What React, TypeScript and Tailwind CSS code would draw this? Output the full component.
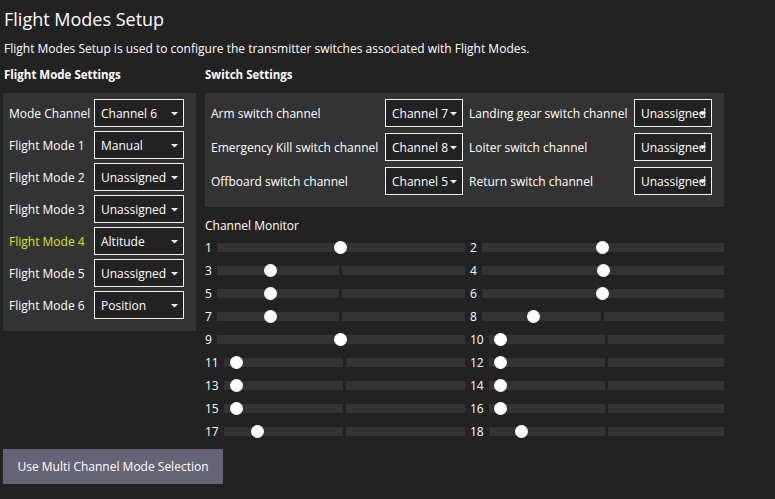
import React from "react";

function Select({ value, w }: { value: string; w: number }) {
  return (
    <div
      className="relative h-[28px] border border-[#f0f0f0] bg-[#222222] flex items-center pl-[6px] whitespace-nowrap"
      style={{ width: w }}
    >
      <span className="leading-[17px]">{value}</span>
      <svg
        className="absolute right-[5px] top-[12px]"
        width="7"
        height="4"
        viewBox="0 0 7 4"
      >
        <polygon points="0,0 7,0 3.5,3.5" fill="#ffffff" />
      </svg>
    </div>
  );
}

const modes: [string, string, boolean][] = [
  ["Mode Channel", "Channel 6", false],
  ["Flight Mode 1", "Manual", false],
  ["Flight Mode 2", "Unassigned", false],
  ["Flight Mode 3", "Unassigned", false],
  ["Flight Mode 4", "Altitude", true],
  ["Flight Mode 5", "Unassigned", false],
  ["Flight Mode 6", "Position", false],
];

const switches: [string, string, string, string][] = [
  ["Arm switch channel", "Channel 7", "Landing gear switch channel", "Unassigned"],
  ["Emergency Kill switch channel", "Channel 8", "Loiter switch channel", "Unassigned"],
  ["Offboard switch channel", "Channel 5", "Return switch channel", "Unassigned"],
];

const channels: [number, number][] = [
  [1, 0.5],
  [2, 0.499],
  [3, 0.215],
  [4, 0.504],
  [5, 0.215],
  [6, 0.5],
  [7, 0.215],
  [8, 0.215],
  [9, 0.5],
  [10, 0.051],
  [11, 0.053],
  [12, 0.051],
  [13, 0.053],
  [14, 0.051],
  [15, 0.053],
  [16, 0.051],
  [17, 0.14],
  [18, 0.139],
];

function ChannelRow({ n, v }: { n: number; v: number }) {
  return (
    <div className="flex items-center h-[23px]">
      <span className="leading-[17px]">{n}</span>
      <div className="relative flex-1 ml-[5px] h-[9px] flex gap-[3px]">
        <div className="flex-1 bg-[#333333]" />
        <div className="flex-1 bg-[#333333]" />
        <div
          className="absolute top-[-2px] w-[13px] h-[13px] rounded-full bg-white"
          style={{ left: `calc(${v * 100}% - 6.5px)` }}
        />
      </div>
    </div>
  );
}

export default function App() {
  return (
    <div
      className="w-full h-screen bg-[#222222] text-white pl-[3px] text-[12px] overflow-hidden"
      style={{ fontFamily: '"Open Sans", "Noto Sans", sans-serif' }}
    >
      <div className="pt-[6px] text-[18px] leading-[26px] pl-[1px]">Flight Modes Setup</div>
      <div className="mt-[8px] leading-[17px] pl-[1px]">
        Flight Modes Setup is used to configure the transmitter switches associated with Flight Modes.
      </div>
      <div className="flex mt-[9px] gap-[9px]">
        <div className="w-[193px] shrink-0">
          <div className="font-bold text-[11.5px] leading-[17px] pl-[1px]">Flight Mode Settings</div>
          <div className="mt-[10px] bg-[#333333] pt-[6px] pl-[6px] pr-[12px] pb-[12px] flex flex-col gap-[4px]">
            {modes.map(([label, val, active]) => (
              <div key={label} className="flex items-center">
                <span
                  className={
                    "w-[85px] shrink-0 leading-[17px] whitespace-nowrap " +
                    (active ? "text-[#d8e41c]" : "")
                  }
                >
                  {label}
                </span>
                <Select value={val} w={90} />
              </div>
            ))}
          </div>
        </div>
        <div className="w-[519px] shrink-0">
          <div className="font-bold text-[11.5px] leading-[17px]">Switch Settings</div>
          <div className="mt-[10px] bg-[#333333] pt-[6px] pl-[6px] pr-[12px] pb-[12px] flex flex-col gap-[6px]">
            {switches.map(([l1, v1, l2, v2]) => (
              <div key={l1} className="flex items-center">
                <span className="w-[174px] shrink-0 leading-[17px] whitespace-nowrap">{l1}</span>
                <Select value={v1} w={78} />
                <span className="w-[165px] ml-[6px] shrink-0 leading-[17px] whitespace-nowrap">{l2}</span>
                <Select value={v2} w={78} />
              </div>
            ))}
          </div>
          <div className="mt-[10px] leading-[17px]">Channel Monitor</div>
          <div className="mt-[2px] grid grid-cols-[260px_254px] gap-x-[5px]">
            {channels.map(([n, v]) => (
              <ChannelRow key={n} n={n} v={v} />
            ))}
          </div>
        </div>
      </div>
      <button className="mt-[6px] w-[220px] h-[35px] bg-[#646474] text-white text-[12px] flex items-center justify-center">
        Use Multi Channel Mode Selection
      </button>
    </div>
  );
}
